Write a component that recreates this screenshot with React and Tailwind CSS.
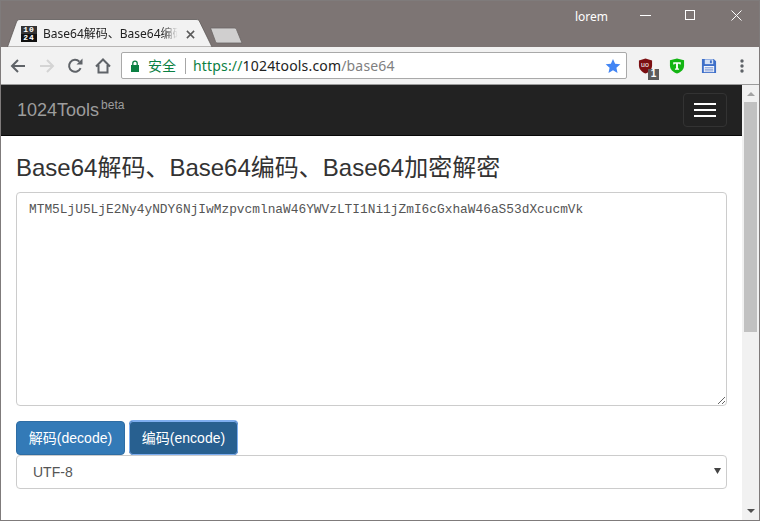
import React from "react";

const sans = "font-['Liberation_Sans','Noto_Sans_CJK_SC',sans-serif]";
const ui = "font-['Noto_Sans','Noto_Sans_CJK_SC',sans-serif]";

function Tab() {
  return (
    <div className="relative ml-[6px] h-[28px] w-[206px] shrink-0">
      <svg className="absolute inset-0" width="206" height="28" viewBox="0 0 206 28">
        <path d="M0.5 28 L9.500 3 C10.300 1 11.500 0.500 13 0.500 L189 0.500 C191 0.500 192 1 192.800 3 L205 28 Z" fill="#f2f2f2" stroke="#5f5a59" strokeWidth="0.8" />
      </svg>
      <div className="relative flex h-full items-center pl-[14px] pt-[2px]">
        <div className="flex h-4 w-4 shrink-0 flex-col items-center justify-center overflow-hidden bg-[#111] font-['Liberation_Mono',monospace] text-[8px] font-bold leading-[8px] text-white">
          <span className="flex h-[8px] w-full justify-center bg-[#333] tracking-[1px]">10</span>
          <span className="flex h-[8px] w-full justify-center tracking-[1px]">24</span>
        </div>
        <div className={`ml-[6px] w-[135px] overflow-hidden whitespace-nowrap text-[12px] text-[#222] ${ui}`} style={{ maskImage: "linear-gradient(to right,#000 88%,transparent)" }}>
          Base64解码、Base64编码、Base64加密解密
        </div>
        <svg className="ml-[8px]" width="9" height="9" viewBox="0 0 10 10"><path d="M1 1 9 9M9 1 1 9" stroke="#5a5a5a" strokeWidth="1.7" /></svg>
      </div>
    </div>
  );
}

function NewTab() {
  return (
    <svg className="ml-[-4px] mt-[6px]" width="34" height="17" viewBox="0 0 34 17">
      <path d="M1.500 1 L25 1 C26.500 1 27 1.500 27.500 2.500 L33 16 L9 16 C7.500 16 7 15.500 6.500 14.500 Z" fill="#d0cfcf" stroke="#6b6665" strokeWidth="0.8" />
    </svg>
  );
}

function Toolbar() {
  return (
    <div className="flex h-[37px] shrink-0 items-center border-b border-[#9b9b9b] bg-[#f2f2f2] pb-[1px]">
      <svg className="ml-[9px]" width="16" height="16" viewBox="0 0 16 16" fill="none" stroke="#5f6368" strokeWidth="2"><path d="M15 8H2M8 2 2 8l6 6" /></svg>
      <svg className="ml-[13px]" width="16" height="16" viewBox="0 0 16 16" fill="none" stroke="#d4d4d4" strokeWidth="2"><path d="M1 8h13M8 2l6 6-6 6" /></svg>
      <svg className="ml-[12px]" width="16" height="16" viewBox="0 0 16 16" fill="none"><path d="M13.600 10.200A6 6 0 1 1 12.400 3.600" stroke="#5f6368" strokeWidth="2" /><path d="M9.500 6.500h6v-6z" fill="#5f6368" /></svg>
      <svg className="ml-[12px]" width="16" height="16" viewBox="0 0 16 16" fill="none" stroke="#5f6368" strokeWidth="2"><path d="M1 8.500 8 1.500l7 7M3.500 7v7.500h9V7" /></svg>
      <div className={`ml-[10px] flex h-[27px] w-[506px] items-center rounded-[2px] border border-[#a9a9a9] bg-white ${ui}`}>
        <svg className="ml-[8px]" width="10" height="12" viewBox="0 0 10 12" fill="none"><rect x="1" y="5" width="8" height="7" fill="#0b8043" /><path d="M2.800 5V3.300a2.200 2.200 0 0 1 4.400 0V5" stroke="#0b8043" strokeWidth="1.300" /></svg>
        <span className="ml-[8px] text-[14px] text-[#0b8043]">安全</span>
        <span className="ml-[9px] h-[16px] w-px bg-[#a6a6a6]" />
        <span className="ml-[7px] whitespace-nowrap text-[14px] tracking-[0.17px] text-[#222]">
          <span className="text-[#0b8043]">https://</span>1024tools.com<span className="text-[#808080]">/base64</span>
        </span>
        <svg className="ml-auto mr-[5px]" width="16" height="16" viewBox="0 0 24 24"><path d="M12 1.500l3.200 7.200 7.800.8-5.900 5.200 1.700 7.700L12 18.400l-6.800 4 1.700-7.700L1 9.500l7.800-.8z" fill="#4285f4" /></svg>
      </div>
      <div className="relative ml-[11px] h-[16px] w-[16px]">
        <svg width="15" height="16" viewBox="0 0 16 17"><path d="M8 0.500 15 2.500V8c0 4-3 7-7 8.500C4 15 1 12 1 8V2.500z" fill="#7b0f12" /></svg>
        <span className={`absolute left-[3px] top-[3px] text-[7px] leading-[8px] text-white ${sans}`}>uo</span>
        <span className={`absolute left-[10px] top-[11px] flex h-[11px] w-[11px] items-center justify-center bg-[#5c5c5c] text-[10px] font-bold leading-none text-white ${sans}`}>1</span>
      </div>
      <svg className="ml-[15px]" width="16" height="16" viewBox="0 0 17 17"><path d="M8.500 0.500 16 2.500V8c0 4-3 7-7.500 8.500C4 15 1 12 1 8V2.500z" fill="#13b513" /><path d="M4.500 4.500h8v2.500h-1l-.6-.8H9.500v5h1.200v1.300H6.300v-1.300h1.200v-5H6.100l-.6.800h-1z" fill="#fff" /></svg>
      <svg className="ml-[16px]" width="16" height="16" viewBox="0 0 17 17"><path d="M1 1h12.500L16 3.500V16H1z" fill="#3e6fc9" /><rect x="4" y="1.500" width="9" height="5" fill="#d5e1f5" /><rect x="9.500" y="2.500" width="2" height="3" fill="#3e6fc9" /><rect x="3" y="8.500" width="11" height="6.500" fill="#f4f6fb" /><path d="M4 10.300h9M4 12h9M4 13.700h9" stroke="#7d9ad6" /></svg>
      <svg className="ml-[23px]" width="4" height="14" viewBox="0 0 4 14" fill="#5f6368"><circle cx="2" cy="2" r="1.700" /><circle cx="2" cy="7" r="1.700" /><circle cx="2" cy="12" r="1.700" /></svg>
    </div>
  );
}

function Scrollbar() {
  return (
    <div className="flex w-[17px] shrink-0 flex-col items-center bg-[#f1f1f1]">
      <svg className="mt-[7px]" width="8" height="4" viewBox="0 0 8 4"><path d="M4 0 8 4H0z" fill="#a3a3a3" /></svg>
      <div className="mt-[6px] h-[230px] w-[13px] bg-[#c1c1c1]" />
      <div className="flex-1" />
      <svg className="mb-[7px]" width="8" height="4" viewBox="0 0 8 4"><path d="M0 0h8L4 4z" fill="#505050" /></svg>
    </div>
  );
}

export default function App() {
  const b64 = "MTM5LjU5LjE2Ny4yNDY6NjIwMzpvcmlnaW46YWVzLTI1Ni1jZmI6cGxhaW46aS53dXcucmVk";
  return (
    <div className="flex h-[521px] w-[760px] flex-col overflow-hidden border border-[#7f7b7b] bg-[#7d7574]">
      <div className="relative flex h-[46px] shrink-0 items-end">
        <Tab />
        <div className="self-start pt-[20px]"><NewTab /></div>
        <span className={`absolute left-[574px] top-[7px] text-[12px] text-white ${ui}`}>lorem</span>
        <svg className="absolute left-[639px] top-[14px]" width="11" height="2"><rect width="11" height="1" fill="#fff" /></svg>
        <svg className="absolute left-[684px] top-[9px]" width="10" height="10"><rect x="0.500" y="0.500" width="9" height="9" fill="none" stroke="#fff" /></svg>
        <svg className="absolute left-[730px] top-[9px]" width="11" height="11" viewBox="0 0 11 11"><path d="M.5.500l10 10M10.500.500l-10 10" stroke="#fff" /></svg>
      </div>
      <div className="h-px shrink-0 bg-[#f2f2f2]" />
      <Toolbar />
      <div className="flex min-h-0 flex-1 bg-white">
        <div className={`min-w-0 flex-1 ${sans}`}>
          <nav className="flex h-[51px] items-center justify-between border-b border-[#080808] bg-[#222] pl-[16px] pr-[15px]">
            <a className="text-[18px] leading-[20px] text-[#9d9d9d]">
              1024Tools<sup className="-top-[7px] ml-[2px] text-[12px] leading-none">beta</sup>
            </a>
            <button className="flex h-[34px] w-[44px] flex-col items-center justify-center gap-[4px] rounded-[4px] border border-[#333]">
              <span className="h-[2px] w-[22px] bg-white" />
              <span className="h-[2px] w-[22px] bg-white" />
              <span className="h-[2px] w-[22px] bg-white" />
            </button>
          </nav>
          <div className="px-[15px]">
            <h1 className="mt-[18px] text-[24px] font-normal leading-[28px] text-[#333]">Base64解码、Base64编码、Base64加密解密</h1>
            <textarea
              readOnly
              spellCheck={false}
              value={b64}
              className="mt-[10px] block h-[214px] w-full rounded-[4px] border border-[#ccc] bg-white px-[12px] pb-[6px] pt-[7px] font-['Liberation_Mono',monospace] text-[12.830px] leading-[20px] text-[#555] outline-none"
            />
            <div className="mt-[15px] flex gap-[4px]">
              <button className="h-[34px] w-[109px] rounded-[4px] border border-[#2e6da4] bg-[#337ab7] text-[14px] text-white">解码(decode)</button>
              <button className="h-[34px] w-[109px] rounded-[4px] border border-[#204d74] bg-[#286090] text-[14px] text-white shadow-[0_-1px_0_#7eaef0] outline outline-1 -outline-offset-1 outline-[#7eaef0]">编码(encode)</button>
            </div>
            <div className="relative">
              <select className="block h-[34px] w-full appearance-none rounded-[4px] border border-[#ccc] bg-white px-[16px] text-[14px] text-[#555] outline-none">
                <option>UTF-8</option>
              </select>
              <svg className="absolute right-[6px] top-[13px]" width="7" height="6" viewBox="0 0 7 6"><path d="M0 0h7L3.500 6z" fill="#444" /></svg>
            </div>
          </div>
        </div>
        <Scrollbar />
      </div>
    </div>
  );
}
